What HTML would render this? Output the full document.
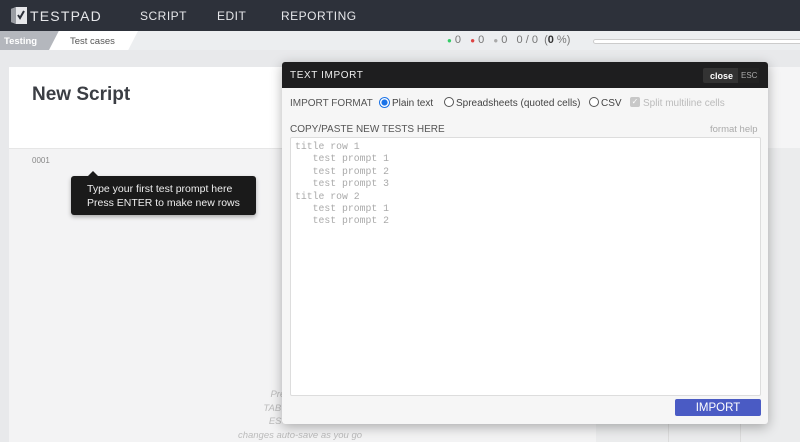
<!DOCTYPE html>
<html><head><style>
*{box-sizing:border-box;margin:0;padding:0}
body{width:800px;height:442px;overflow:hidden;background:#e8e9eb;font-family:"Liberation Sans",sans-serif;position:relative}
.abs{position:absolute}
.nav{left:0;top:0;width:800px;height:31px;background:#2d313a;color:#e6e7ea;font-size:12px}
.nav span{position:absolute;top:9px;letter-spacing:.5px}
.crumb{left:0;top:31px;width:800px;height:19px;background:#eceef0}
.mono{font-family:"Liberation Mono",monospace;font-size:9.8px;color:#aaa;line-height:12.4px;white-space:pre}
</style></head><body>
<div class="abs nav">
  <svg class="abs" style="left:10px;top:6px" width="18" height="19" viewBox="0 0 18 19"><path d="M1 3 L6 1 L17 1 L17 18 L6 18 L1 16Z" fill="#e6e7ea"/><path d="M1 3 L6 1 L6 18 L1 16Z" fill="#9a9da3"/><path d="M8 9 L10 12 L14 5" stroke="#2d313a" stroke-width="2" fill="none"/></svg>
  <span style="left:30px;top:8px;font-size:14px;letter-spacing:1.2px">TESTPAD</span>
  <span style="left:140px">SCRIPT</span>
  <span style="left:217px">EDIT</span>
  <span style="left:281px">REPORTING</span>
</div>
<div class="abs crumb">
  <div class="abs" style="left:0;top:0;width:60px;height:19px;background:#b4b7bd;clip-path:polygon(0 0,100% 0,84% 100%,0 100%)"></div>
  <div class="abs" style="left:49px;top:0;width:89px;height:19px;background:#fff;clip-path:polygon(11% 0,100% 0,89% 100%,0 100%)"></div>
  <span class="abs" style="left:4px;top:5px;font-size:9.5px;color:#fff;font-weight:bold">Testing</span>
  <span class="abs" style="left:70px;top:5px;font-size:9.5px;color:#555">Test cases</span>
  <span class="abs" style="left:447px;top:3px;font-size:11px;color:#777;white-space:pre"><span style="color:#3c6;font-size:8px">●</span> 0   <span style="color:#d44;font-size:8px">●</span> 0   <span style="color:#aaa;font-size:8px">●</span> 0   0 / 0  (<b style="color:#333">0</b> %)</span>
  <div class="abs" style="left:593px;top:8px;width:210px;height:5px;border:1px solid #ccc;border-radius:3px;background:#fff"></div>
</div>
<div class="abs" style="left:9px;top:67px;width:587px;height:81px;background:#fff"></div>
<div class="abs" style="left:596px;top:67px;width:204px;height:81px;background:#f5f5f6"></div>
<div class="abs" style="left:9px;top:148px;width:587px;height:294px;background:#f3f3f4;border-top:1px solid #e6e6e6"></div>
<div class="abs" style="left:596px;top:148px;width:204px;height:294px;background:#ebeced"></div>
<div class="abs" style="left:668px;top:148px;width:1px;height:294px;background:#dcdcdc"></div>
<div class="abs" style="left:740px;top:148px;width:1px;height:294px;background:#dcdcdc"></div>
<div class="abs" style="left:32px;top:84px;font-size:19px;font-weight:bold;color:#3b3e44">New Script</div>
<div class="abs" style="left:32px;top:156px;font-size:8px;color:#888">0001</div>
<div class="abs" style="left:71px;top:176px;width:185px;height:39px;background:#1a1a1a;border-radius:3px;color:#eee;font-size:10.5px;line-height:14px;padding:6px 0 0 16px;box-shadow:0 2px 4px rgba(0,0,0,.3)">Type your first test prompt here<br>Press ENTER to make new rows</div>
<div class="abs" style="left:88px;top:171px;width:0;height:0;border-left:5px solid transparent;border-right:5px solid transparent;border-bottom:5px solid #1a1a1a"></div>
<div class="abs" style="left:150px;top:388px;width:300px;text-align:center;font-size:9.5px;line-height:13.5px;color:#bbb;font-style:italic">Press ENTER<br>TAB / SHIFT-TAB<br>ESCAPE to un<br>changes auto-save as you go</div>

<div class="abs" style="left:282px;top:62px;width:486px;height:362px;background:#f6f6f6;border-radius:3px;box-shadow:0 3px 12px rgba(0,0,0,.3);overflow:hidden">
  <div class="abs" style="left:0;top:0;width:486px;height:26px;background:#1e1e1f"></div>
  <span class="abs" style="left:8px;top:8px;font-size:10px;color:#eee;letter-spacing:.6px">TEXT IMPORT</span>
  <div class="abs" style="left:421px;top:6px;width:56px;height:15px;background:#333;border-radius:2px"></div>
  <span class="abs" style="left:428px;top:9px;font-size:9px;color:#fff;font-weight:bold">close</span>
  <div class="abs" style="left:456px;top:6px;width:21px;height:15px;background:#222"></div>
  <span class="abs" style="left:459px;top:9px;font-size:8px;color:#aaa">ESC</span>
  <span class="abs" style="left:8px;top:36px;font-size:10px;color:#555">IMPORT FORMAT</span>
  <div class="abs" style="left:97px;top:35px;width:11px;height:11px;border-radius:50%;background:radial-gradient(circle,#1a73e8 0 2.8px,#fff 3.3px);border:1.5px solid #1a73e8"></div>
  <span class="abs" style="left:110px;top:36px;font-size:10px;color:#444">Plain text</span>
  <div class="abs" style="left:162px;top:35px;width:10px;height:10px;border-radius:50%;border:1px solid #555;background:#fff"></div>
  <span class="abs" style="left:174px;top:36px;font-size:10px;color:#444">Spreadsheets (quoted cells)</span>
  <div class="abs" style="left:307px;top:35px;width:10px;height:10px;border-radius:50%;border:1px solid #555;background:#fff"></div>
  <span class="abs" style="left:319px;top:36px;font-size:10px;color:#444">CSV</span>
  <div class="abs" style="left:348px;top:35px;width:10px;height:10px;border-radius:2px;background:#c8c8c8;color:#fff;font-size:8px;line-height:10px;text-align:center">✓</div>
  <span class="abs" style="left:361px;top:36px;font-size:10px;color:#bbb">Split multiline cells</span>
  <span class="abs" style="left:8px;top:62px;font-size:10px;color:#555">COPY/PASTE NEW TESTS HERE</span>
  <span class="abs" style="left:428px;top:62px;font-size:9.5px;color:#aaa">format help</span>
  <div class="abs" style="left:8px;top:75px;width:471px;height:259px;background:#fff;border:1px solid #ddd;border-radius:2px;padding:3px 4px">
<div class="mono">title row 1
   test prompt 1
   test prompt 2
   test prompt 3
title row 2
   test prompt 1
   test prompt 2</div>
  </div>
  <div class="abs" style="left:393px;top:337px;width:86px;height:17px;background:#4a5bc4;border-radius:2px;color:#fff;font-size:11.5px;text-align:center;line-height:18px">IMPORT</div>
</div>
</body></html>
